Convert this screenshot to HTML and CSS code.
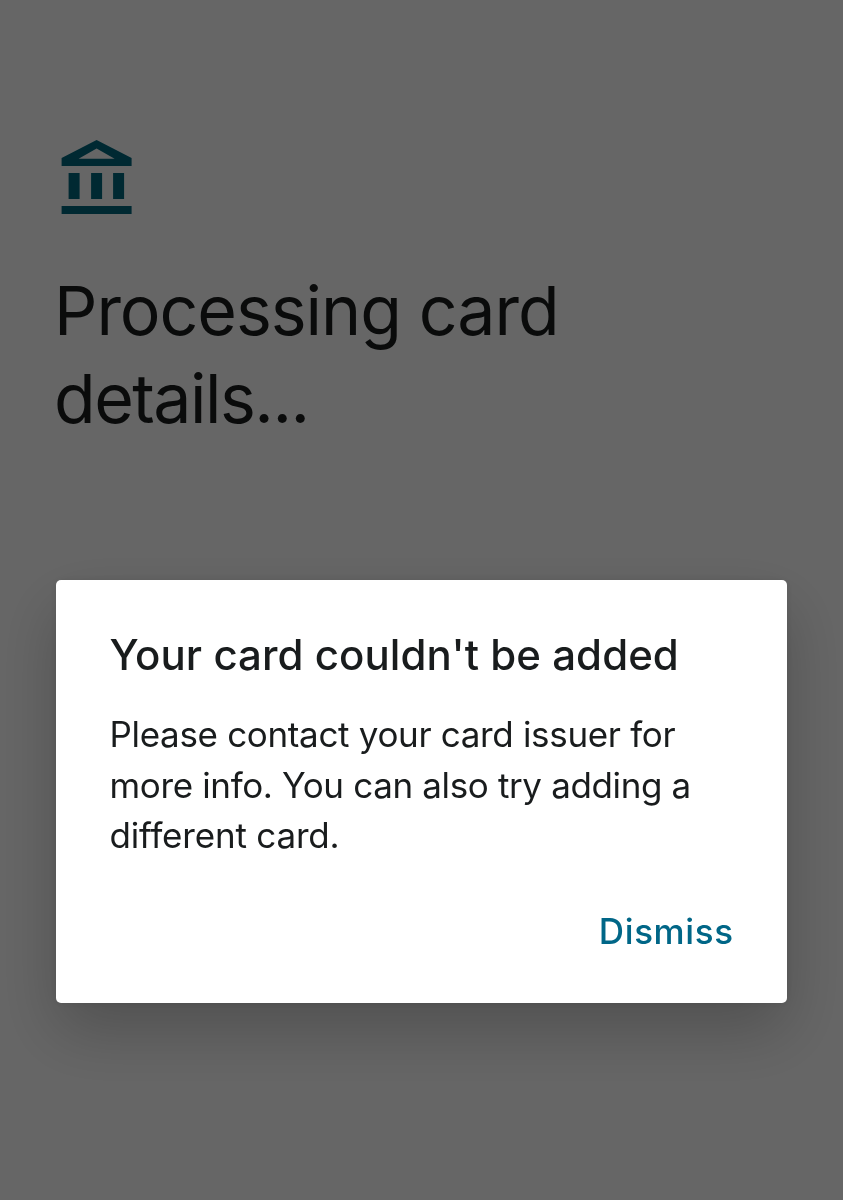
FILE: index.html
```html
<!DOCTYPE html>
<html lang="en">
<head>
    <meta charset="UTF-8">
    <meta name="viewport" content="width=device-width, initial-scale=1.0">
    <title>Add card</title>
    <link rel="stylesheet" href="styles.css">
</head>
<body>
    <main class="page">
        <svg class="bank-icon" viewBox="0.4 0 70 74" aria-hidden="true">
            <path fill-rule="evenodd" d="M35 0L70 18V26H0V18ZM35 8.5L17 18.8H53Z"/>
            <path d="M7 33H18V59H7ZM29.5 33H40.5V59H29.5ZM51.5 33H62.5V59H51.5ZM0 66H70V74H0Z"/>
        </svg>
        <h1 class="page-title"><span class="title-first">Processing card</span><br><span class="title-second">details...</span></h1>
    </main>

    <!-- Error dialog -->
    <div class="overlay">
        <div class="dialog" role="alertdialog" aria-labelledby="dialog-title" aria-describedby="dialog-text">
            <h2 class="dialog-title" id="dialog-title">Your card couldn't be added</h2>
            <p class="dialog-text" id="dialog-text"><span class="line-1">Please contact your card issuer for</span><br><span class="line-2">more info. You can also try adding a</span><br><span class="line-3">different card.</span></p>
            <div class="dialog-actions">
                <button class="dismiss" type="button">Dismiss</button>
            </div>
        </div>
    </div>
</body>
</html>
```
FILE: styles.css
```css
/* Base styles */
* {
    box-sizing: border-box;
}
body {
    margin: 0;
    font-family: "Google Sans", Inter, sans-serif;
    background-color: #fff;
    color: #191c1d;
}
h1, h2, p {
    margin: 0;
}

/* Page */
.page {
    height: 100vh;
    padding: 140px 54px 0;
}
.bank-icon {
    display: block;
    width: 70px;
    height: 74px;
    margin-left: 8px;
    overflow: visible;
    fill: #00677d;
}
.page-title {
    margin-top: 53px;
    font-size: 68px;
    font-weight: 400;
    line-height: 87.5px;
    white-space: nowrap;
}
.title-first {
    letter-spacing: -1.05px;
}
.title-second {
    letter-spacing: -1.5px;
}

/* Dialog */
.overlay {
    position: fixed;
    inset: 0;
    display: flex;
    align-items: flex-start;
    padding: 580px 56px 0;
    background-color: rgba(0, 0, 0, 0.6);
}
.dialog {
    width: 731px;
    height: 423px;
    flex: none;
    padding: 47px 54px 0 53.5px;
    background-color: #fff;
    border-radius: 5px;
    box-shadow: 0 28px 64px rgba(0, 0, 0, 0.22), 0 0 8px rgba(0, 0, 0, 0.1);
}
.dialog-title {
    font-size: 42px;
    font-weight: 500;
    line-height: 56px;
    letter-spacing: 0.05px;
    white-space: nowrap;
}
.dialog-text {
    margin-top: 26px;
    font-size: 35px;
    line-height: 50.5px;
    white-space: nowrap;
}
.line-1 {
    letter-spacing: -0.33px;
}
.line-2 {
    letter-spacing: -0.36px;
}
.line-3 {
    letter-spacing: -0.2px;
}
.dialog-actions {
    display: flex;
    justify-content: flex-end;
    margin-top: 45px;
}
.dismiss {
    margin-right: -0.6px;
    padding: 0;
    border: none;
    background: none;
    color: #006687;
    font-family: inherit;
    font-size: 35px;
    font-weight: 500;
    line-height: 50px;
    letter-spacing: 0.6px;
    cursor: pointer;
}
```
